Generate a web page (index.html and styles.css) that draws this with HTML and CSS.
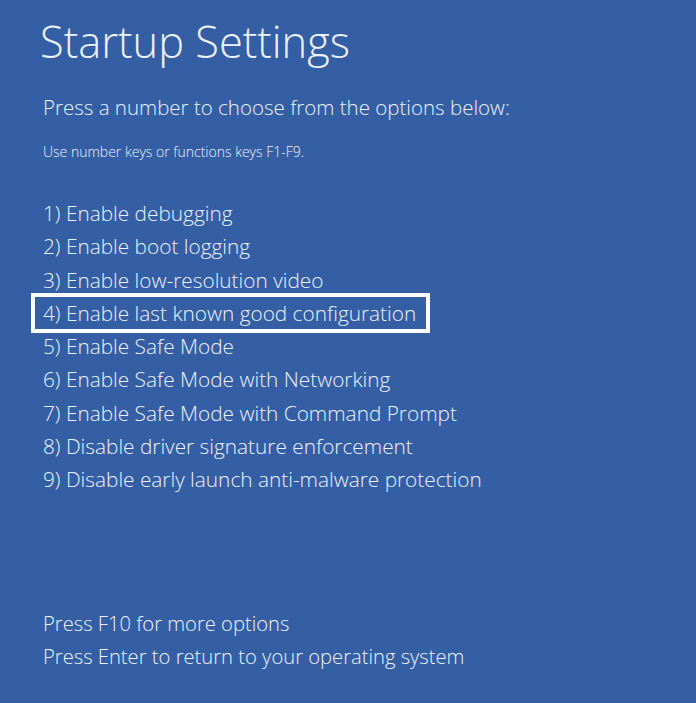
FILE: index.html
```html
<!DOCTYPE html>
<html>
<head>
<meta charset="utf-8">
<link rel="stylesheet" href="styles.css">
</head>
<body>
<main class="screen">
  <h1 class="title">Startup Settings</h1>
  <p class="lead">Press a number to choose from the options below:</p>
  <p class="hint">Use number keys or functions keys F1-F9.</p>
  <ol class="options">
    <li class="opt">1) Enable debugging</li>
    <li class="opt">2) Enable boot logging</li>
    <li class="opt">3) Enable low-resolution video</li>
    <li class="opt selected">4) Enable last known good configuration</li>
    <li class="opt">5) Enable Safe Mode</li>
    <li class="opt">6) Enable Safe Mode with Networking</li>
    <li class="opt">7) Enable Safe Mode with Command Prompt</li>
    <li class="opt">8) Disable driver signature enforcement</li>
    <li class="opt">9) Disable early launch anti-malware protection</li>
  </ol>
  <div class="footer">
    <p class="foot">Press F10 for more options</p>
    <p class="foot">Press Enter to return to your operating system</p>
  </div>
</main>
</body>
</html>
```
FILE: styles.css
```css
html, body {
  margin: 0;
  padding: 0;
  height: 100%;
  background: #345fa5;
}
body {
  font-family: "Open Sans", "Noto Sans", sans-serif;
  font-weight: 300;
  color: #eef2f9;
}
.screen {
  height: 703px;
  box-sizing: border-box;
  padding: 12px 0 0 42px;
  display: flex;
  flex-direction: column;
}
.title {
  margin: 0 0 0 -2px;
  font-size: 43.4px;
  font-weight: 300;
  line-height: 60px;
}
.lead {
  margin: 21px 0 0 1px;
  font-size: 20.5px;
  line-height: 28px;
}
.hint {
  margin: 22px 0 0 1px;
  font-size: 14px;
  line-height: 18px;
}
.options {
  list-style: none;
  margin: 36px 0 0 0;
  padding: 0;
  display: flex;
  flex-direction: column;
}
.opt {
  font-size: 20.8px;
  line-height: 33.25px;
  padding-left: 1px;
}
.selected {
  align-self: flex-start;
  margin: -3.375px 0 -3.375px -11px;
  padding: 0 10px 0 8px;
  border: 4px solid #ffffff;
  line-height: 32px;
}
.footer {
  margin-top: auto;
  padding-bottom: 30px;
}
.foot {
  margin: 0 0 0 1px;
  font-size: 20.2px;
  line-height: 33px;
}
```
